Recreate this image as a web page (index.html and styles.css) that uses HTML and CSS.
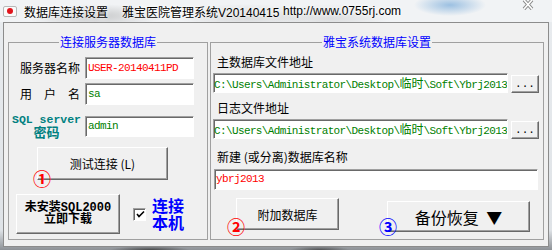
FILE: index.html
```html
<!DOCTYPE html>
<html lang="zh-CN">
<head>
  <meta charset="UTF-8">
  <title>数据库连接设置</title>
  <link rel="stylesheet" href="styles.css">
</head>
<body>

<div class="window">
  <!-- TITLE BAR -->
  <div class="titlebar">
    <span class="app-icon"><span class="app-dot"></span></span>
    <span class="title-main">数据库连接设置</span>
    <span class="title-sys">雅宝医院管理系统V20140415</span>
    <span class="title-url">http://www.0755rj.com</span>
    <svg class="title-close" width="12" height="10" viewBox="0 0 12 10">
      <path d="M2 0 L10 9 M10 0 L2 9" stroke="#8a8a8a" stroke-width="3.4" fill="none"/>
      <path d="M2 0 L10 9 M10 0 L2 9" stroke="#ffffff" stroke-width="1.6" fill="none"/>
    </svg>
  </div>

  <div class="form">
    <!-- Connexion serveur -->
    <fieldset class="group group-server">
      <legend>连接服务器数据库</legend>

      <div class="field-row row-1">
        <label class="field-label">服务器名称</label>
        <div class="textbox val-red">USER-20140411PD</div>
      </div>
      <div class="field-row row-2">
        <label class="field-label spread"><span>用</span><span>户</span><span>名</span></label>
        <div class="textbox val-green">sa</div>
      </div>
      <div class="field-row row-3">
        <label class="field-label sql-label">
          <span class="sql-top">SQL server</span>
          <span class="sql-bottom">密码</span>
        </label>
        <div class="textbox val-green">admin</div>
      </div>

      <div class="btn-wrap test-wrap">
        <button class="btn btn-test">测试连接 (L)</button>
        <span class="badge badge-red badge-1">①</span>
      </div>

      <div class="local-row">
        <button class="btn btn-install">未安装SQL2000<br>立即下载</button>
        <span class="checkbox">
          <svg width="9" height="9" viewBox="0 0 9 9">
            <path d="M1 4 L3 6.5 L8 1.5" stroke="#000" stroke-width="1.6" fill="none"/>
          </svg>
        </span>
        <span class="local-text">连接<br>本机</span>
      </div>
    </fieldset>

    <!-- Parametres systeme -->
    <fieldset class="group group-system">
      <legend>雅宝系统数据库设置</legend>

      <div class="sys-label label-1">主数据库文件地址</div>
      <div class="path-row">
        <div class="textbox path-box val-green">C:\Users\Administrator\Desktop\<span class="cjk">临时</span>\Soft\Ybrj2013</div>
        <button class="btn btn-browse">...</button>
      </div>

      <div class="sys-label label-2">日志文件地址</div>
      <div class="path-row">
        <div class="textbox path-box val-green">C:\Users\Administrator\Desktop\<span class="cjk">临时</span>\Soft\Ybrj2013</div>
        <button class="btn btn-browse">...</button>
      </div>

      <div class="sys-label label-3">新建 (或分离)数据库名称</div>
      <div class="textbox name-box val-red">ybrj2013</div>

      <div class="action-row">
        <div class="btn-wrap">
          <button class="btn btn-attach">附加数据库</button>
          <span class="badge badge-red badge-2">②</span>
        </div>
        <div class="btn-wrap backup-wrap">
          <button class="btn btn-backup">备份恢复 ▼</button>
          <span class="badge badge-blue badge-3">③</span>
        </div>
      </div>
    </fieldset>
  </div>
</div>

</body>
</html>
```

FILE: styles.css
```css
/* BASE */
* {
  box-sizing: border-box;
}
body {
  margin: 0;
  width: 552px;
  height: 250px;
  overflow: hidden;
  font-family: "Noto Sans CJK SC", sans-serif;
  font-size: 12px;
  color: #000;
}

/* WINDOW FRAME */
.window {
  width: 552px;
  height: 250px;
  background:
    radial-gradient(ellipse 40px 4px at 150px 250px, rgba(40,40,40,0.7), transparent),
    radial-gradient(ellipse 30px 4px at 320px 250px, rgba(40,40,40,0.6), transparent),
    linear-gradient(to bottom, #e9ecef 0, #dfe3e7 230px, #8d9196 250px);
}

/* TITLE BAR */
.titlebar {
  height: 22px;
  display: flex;
  align-items: center;
  font-family: "Liberation Sans", "Noto Sans CJK SC", sans-serif;
  font-size: 12px;
  text-shadow: 0 0 5px #fff, 0 0 3px #fff;
  background:
    radial-gradient(ellipse 70px 12px at 95px 16px, rgba(150,150,150,0.45), transparent),
    radial-gradient(ellipse 70px 12px at 245px 16px, rgba(170,170,170,0.4), transparent),
    radial-gradient(ellipse 36px 11px at 450px 5px, rgba(110,165,215,0.65), transparent),
    radial-gradient(ellipse 60px 14px at 330px 18px, rgba(180,180,180,0.35), transparent),
    #f1f3f5;
}
.app-icon {
  width: 14px;
  height: 11px;
  margin-left: 3px;
  border: 1px solid #b8b8b8;
  border-radius: 2px;
  background: #fafafa;
  display: flex;
  align-items: center;
  justify-content: center;
}
.app-dot {
  width: 6px;
  height: 6px;
  border-radius: 50%;
  background: #e0141c;
}
.title-main {
  width: 98px;
  margin-left: 7px;
}
.title-sys {
  width: 161px;
}
.title-url {
  flex: 1;
}
.title-close {
  align-self: flex-start;
  margin-right: 18px;
}

/* FORM */
.form {
  margin-left: 3px;
  width: 546px;
  height: 225px;
  background: #f0f0f0;
  border: 1px solid #8c8c8c;
  display: flex;
  gap: 2px;
  padding: 12px 0 0 4px;
}
.group {
  margin: 0;
  padding: 0;
  min-width: 0;
  height: 205px;
  border: 1px solid #a0a0a0;
}
.group legend {
  margin: 0 auto;
  padding: 0 1px;
  line-height: 14px;
  color: #0000ff;
}
.group-server { width: 200px; }
.group-system { width: 334px; }

/* CONTROLS */
.textbox {
  height: 22px;
  background: #fff;
  border: 1px solid;
  border-color: #a0a0a0 #fff #fff #a0a0a0;
  box-shadow: inset 1px 1px #696969;
  padding: 0 0 0 2px;
  font-family: "Liberation Mono", monospace;
  font-size: 11px;
  letter-spacing: -0.6px;
  line-height: 20px;
  white-space: nowrap;
  overflow: hidden;
}
.textbox .cjk {
  font-family: "Noto Sans CJK SC", sans-serif;
  font-size: 12px;
  letter-spacing: 0;
}
.val-red { color: #ff0000; }
.val-green { color: #008000; }

.btn {
  margin: 0;
  padding: 0;
  background: #f0f0f0;
  border: 1px solid;
  border-color: #fff #696969 #696969 #fff;
  box-shadow: inset -1px -1px #a0a0a0;
  font-family: "Noto Sans CJK SC", sans-serif;
  font-size: 12px;
  color: #000;
}
.btn-wrap {
  position: relative;
}
.badge {
  position: absolute;
  font-family: "Noto Sans CJK SC", sans-serif;
  font-size: 18px;
  font-weight: bold;
  line-height: 1;
}
.badge-red { color: #ff0000; }
.badge-blue { color: #0000ff; }

/* SERVER GROUP */
.field-row {
  display: flex;
  align-items: center;
  height: 22px;
  margin-left: 3px;
}
.row-1 { margin-top: 8px; }
.row-2 { margin-top: 4px; }
.row-3 { margin-top: 11px; height: 21px; }
.row-3 .textbox { height: 21px; line-height: 19px; }
.field-label {
  width: 73px;
  padding-right: 5px;
  text-align: right;
  line-height: 14px;
}
.field-row .textbox { width: 109px; }
.spread {
  display: flex;
  justify-content: space-between;
  padding-left: 8px;
}
.sql-label {
  padding-right: 4px;
  text-align: center;
  color: #008080;
  font-weight: bold;
  display: flex;
  flex-direction: column;
  align-items: center;
}
.sql-top {
  font-family: "Liberation Mono", monospace;
  font-size: 11.5px;
  line-height: 10px;
}
.sql-bottom {
  font-size: 13px;
  line-height: 14px;
}

.test-wrap {
  margin: 10px 0 0 28px;
  width: 131px;
}
.btn-test {
  width: 131px;
  height: 33px;
}
.badge-1 { left: -4px; top: 22px; }

.local-row {
  display: flex;
  align-items: center;
  margin: 14px 0 0 7px;
}
.btn-install {
  width: 104px;
  height: 40px;
  font-family: "Liberation Mono", "Noto Sans CJK SC", monospace;
  font-weight: bold;
  line-height: 12px;
}
.checkbox {
  width: 13px;
  height: 13px;
  margin-left: 13px;
  background: #fff;
  border: 1px solid;
  border-color: #a0a0a0 #fff #fff #a0a0a0;
  box-shadow: inset 1px 1px #696969;
  display: flex;
  align-items: center;
  justify-content: center;
  padding: 1px 0 0 1px;
}
.local-text {
  margin-left: 6px;
  color: #0000ff;
  font-size: 16px;
  font-weight: bold;
  line-height: 17px;
}

/* SYSTEM GROUP */
.sys-label {
  margin-left: 6px;
  line-height: 14px;
}
.label-1 { margin-top: 6px; }
.label-2 { margin-top: 8px; }
.label-3 { margin-top: 11px; }
.path-row {
  display: flex;
  align-items: flex-start;
  margin: 4px 0 0 2px;
}
.path-box {
  width: 295px;
  height: 20px;
  line-height: 18px;
  padding-left: 0;
  letter-spacing: -0.62px;
}
.btn-browse {
  width: 28px;
  height: 18px;
  margin: 2px 0 0 3px;
  font-family: "Liberation Mono", monospace;
  font-size: 11px;
  line-height: 12px;
}
.name-box {
  width: 324px;
  height: 21px;
  line-height: 19px;
  margin: 5px 0 0 3px;
  padding-left: 1px;
}
.action-row {
  display: flex;
  align-items: flex-start;
  margin-top: 8px;
}
.action-row .btn-wrap:first-child { margin-left: 25px; }
.btn-attach {
  width: 103px;
  height: 32px;
}
.badge-2 { left: -9px; top: 19px; }
.backup-wrap {
  margin: 3px 0 0 48px;
}
.btn-backup {
  width: 143px;
  height: 31px;
  font-size: 16px;
  word-spacing: 4px;
}
.badge-3 { left: -8px; top: 16px; }
```
